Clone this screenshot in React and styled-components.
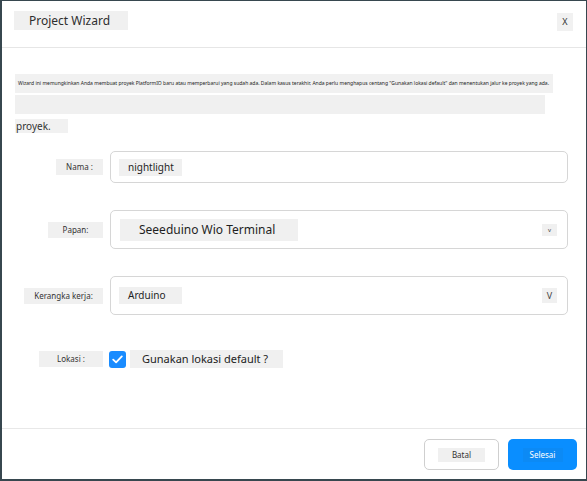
import React from 'react';
import styled, { createGlobalStyle } from 'styled-components';

const GlobalStyle = createGlobalStyle`
  html, body {
    margin: 0;
    padding: 0;
    height: 100%;
    background: #ffffff;
  }
  #root {
    height: 100%;
  }
  * {
    box-sizing: border-box;
  }
`;

const fields = [
  { label: 'Nama :', width: 47, value: 'nightlight', size: 'sm', tall: false },
  { label: 'Papan:', width: 55, value: 'Seeeduino Wio Terminal', size: 'lg', tall: true, arrow: 'v' },
  { label: 'Kerangka kerja:', width: 79, value: 'Arduino', size: 'sm', tall: true, arrow: 'V' },
];

const App = () => {
  return (
    <>
      <GlobalStyle />
      <Window>
        <Header>
          <Title>Project Wizard</Title>
          <CloseButton>X</CloseButton>
        </Header>

        <Body>
          <Intro>
            <IntroLine>
              Wizard ini memungkinkan Anda membuat proyek PlatformIO baru atau memperbarui yang sudah ada. Dalam kasus terakhir, Anda perlu menghapus centang "Gunakan lokasi default" dan menentukan jalur ke proyek yang ada.
            </IntroLine>
            <IntroBlank />
            <IntroTail>proyek.</IntroTail>
          </Intro>

          <Form>
            {fields.map((f) => (
              <Row key={f.label}>
                <Label $w={f.width}>{f.label}</Label>
                <Field $tall={f.tall}>
                  <Value $size={f.size}>{f.value}</Value>
                  {f.arrow && <Arrow $big={f.arrow === 'V'}>{f.arrow}</Arrow>}
                </Field>
              </Row>
            ))}

            <Row $check>
              <Label $w={64}>Lokasi :</Label>
              <CheckRow>
                <CheckBox>
                  <svg width="11" height="9" viewBox="0 0 11 9" fill="none">
                    <path d="M1.2 4.6 L4.1 7.4 L9.8 1.4" stroke="#fff" strokeWidth="1.8" strokeLinecap="round" strokeLinejoin="round" />
                  </svg>
                </CheckBox>
                <CheckText>Gunakan lokasi default ?</CheckText>
              </CheckRow>
            </Row>
          </Form>
        </Body>

        <Footer>
          <CancelButton>
            <ButtonLabel>Batal</ButtonLabel>
          </CancelButton>
          <DoneButton>
            <ButtonLabel $primary>Selesai</ButtonLabel>
          </DoneButton>
        </Footer>
      </Window>
    </>
  );
};

export default App;

const Window = styled.div`
  height: 100vh;
  display: flex;
  flex-direction: column;
  border: 1px solid #37474f;
  border-left-width: 2px;
  border-bottom-width: 2px;
  background: #fff;
  font-family: 'Noto Sans', 'Open Sans', sans-serif;
  color: #2b2b2b;
`;

const Header = styled.div`
  height: 47px;
  flex-shrink: 0;
  display: flex;
  align-items: flex-start;
  justify-content: space-between;
  padding: 10px 13px 0 12px;
  border-bottom: 1px solid #e6e6e6;
`;

const Title = styled.div`
  background: #f0f0f0;
  font-size: 12px;
  line-height: 19px;
  white-space: nowrap;
  width: 114px;
  padding-left: 15px;
  color: #2e2e2e;
`;

const CloseButton = styled.div`
  background: #f1f1f1;
  font-size: 9px;
  line-height: 18px;
  width: 16px;
  text-align: center;
  margin-top: 2px;
  color: #333;
`;

const Body = styled.div`
  flex: 1;
  padding: 26px 18px 0 13px;
`;

const Intro = styled.div`
  display: flex;
  flex-direction: column;
  align-items: flex-start;
`;

const IntroLine = styled.div`
  background: #f1f1f1;
  font-size: 5px;
  line-height: 19px;
  white-space: nowrap;
  padding: 0 3px;
  width: 538px;
  overflow: hidden;
  color: #222;
`;

const IntroBlank = styled.div`
  background: #f0f0f0;
  width: 530px;
  height: 19px;
  margin-top: 2px;
`;

const IntroTail = styled.div`
  background: #f1f1f1;
  font-size: 10px;
  line-height: 14px;
  width: 53px;
  padding-left: 1px;
  margin-top: 5px;
  color: #333;
`;

const Form = styled.div`
  margin-top: 18px;
  display: flex;
  flex-direction: column;
`;

const Row = styled.div`
  display: grid;
  grid-template-columns: 88px 1fr;
  column-gap: 7px;
  align-items: center;
  margin-bottom: ${(p) => (p.$check ? '0' : '27px')};
  margin-top: ${(p) => (p.$check ? '8px' : '0')};
`;

const Label = styled.div`
  justify-self: end;
  width: ${(p) => p.$w}px;
  background: #f0f0f0;
  font-size: 8px;
  line-height: 16px;
  white-space: nowrap;
  text-align: center;
  color: #333;
`;

const Field = styled.div`
  height: ${(p) => (p.$tall ? '39px' : '32px')};
  border: 1px solid #d6d6d6;
  border-radius: 5px;
  display: flex;
  align-items: center;
  justify-content: space-between;
  padding: 0 10px 0 8px;
  background: #fff;
`;

const Value = styled.div`
  background: #f0f0f0;
  font-size: ${(p) => (p.$size === 'lg' ? '12px' : '10px')};
  line-height: ${(p) => (p.$size === 'lg' ? '22px' : '17px')};
  padding-left: ${(p) => (p.$size === 'lg' ? '19px' : '9px')};
  margin-left: ${(p) => (p.$size === 'lg' ? '1px' : '0')};
  width: ${(p) => (p.$size === 'lg' ? '178px' : '63px')};
  white-space: nowrap;
  color: #1f1f1f;
`;

const Arrow = styled.div`
  background: #f0f0f0;
  width: 15px;
  text-align: center;
  font-size: ${(p) => (p.$big ? '9px' : '6px')};
  line-height: ${(p) => (p.$big ? '15px' : '12px')};
  color: #444;
`;

const CheckRow = styled.div`
  display: flex;
  align-items: center;
  gap: 4px;
`;

const CheckBox = styled.div`
  width: 17px;
  height: 17px;
  border-radius: 3px;
  background: #1a8cff;
  display: flex;
  align-items: center;
  justify-content: center;
  margin-left: -1px;
`;

const CheckText = styled.div`
  background: #f0f0f0;
  font-size: 11px;
  line-height: 18px;
  padding-left: 12px;
  width: 153px;
  white-space: nowrap;
  color: #222;
`;

const Footer = styled.div`
  height: 51px;
  flex-shrink: 0;
  border-top: 1px solid #e8e8e8;
  display: flex;
  align-items: flex-start;
  justify-content: flex-end;
  gap: 9px;
  padding: 10px 9px 0 0;
`;

const CancelButton = styled.div`
  width: 75px;
  height: 31px;
  border: 1px solid #cfcfcf;
  border-radius: 5px;
  background: #fff;
  display: flex;
  align-items: center;
  justify-content: center;
`;

const DoneButton = styled.div`
  width: 69px;
  height: 31px;
  border-radius: 5px;
  background: #0a8eff;
  display: flex;
  align-items: center;
  justify-content: center;
`;

const ButtonLabel = styled.div`
  background: ${(p) => (p.$primary ? '#0c8af5' : '#f0f0f0')};
  color: ${(p) => (p.$primary ? '#fff' : '#333')};
  font-size: 8px;
  line-height: 14px;
  width: ${(p) => (p.$primary ? '40px' : '47px')};
  text-align: center;
`;
